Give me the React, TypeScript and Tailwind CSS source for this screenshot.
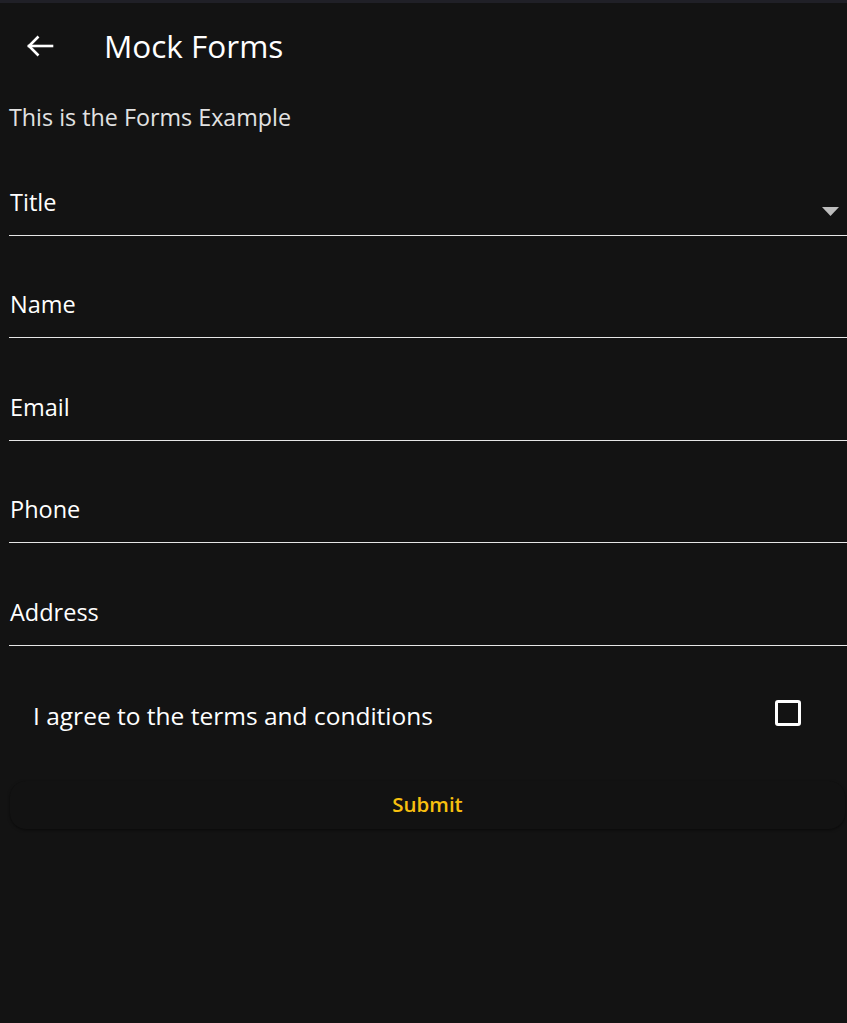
const fields = ["Name", "Email", "Phone", "Address"];

const Field: React.FC<{ label: string; dropdown?: boolean }> = ({ label, dropdown }) => {
    return (
        <div className="relative h-[102.5px] flex items-end pl-[9px]">
            <div className="flex w-full items-end border-b-[1.5px] border-[#e6e6e6] pb-[18px]">
                <span className="pl-px text-[23.5px] leading-[30px] text-white">{label}</span>
                {dropdown && (
                    <svg className="ml-auto mb-[1px] mr-[8px]" width="17" height="9" viewBox="0 0 17 9">
                        <path d="M0 0h17L8.5 9z" fill="#bdbdbd" />
                    </svg>
                )}
            </div>
        </div>
    );
};

const App: React.FC = () => {
    return (
        <div
            className="flex min-h-[1023px] w-[847px] flex-col bg-[#131313] text-white"
            style={{ fontFamily: '"Segoe UI", "Open Sans", sans-serif' }}
        >
            <div className="h-[3px] bg-[#202027]" />
            <div className="flex h-[86px] items-center">
                <button className="ml-[25px] flex h-[28px] w-[30px] items-center justify-center text-white">
                    <svg width="28" height="24" viewBox="0 0 28 24" fill="none" stroke="white" strokeWidth="2.6" strokeLinecap="square">
                        <path d="M3 12H26" />
                        <path d="M12.5 2.5L3 12l9.5 9.5" strokeLinecap="butt" />
                    </svg>
                </button>
                <h1 className="ml-[49px] text-[31.5px] leading-[38px] text-white">Mock Forms</h1>
            </div>
            <p className="mt-[13px] pl-[9px] text-[23.3px] leading-[30px] text-[#e2e2e2]">This is the Forms Example</p>

            <div className="mt-[1px]">
                <Field label="Title" dropdown />
                {fields.map((f) => (
                    <Field key={f} label={f} />
                ))}
            </div>

            <div className="flex h-[140px] items-center justify-between pl-[33px] pr-[46px]">
                <span className="text-[24.5px] leading-[30px] text-white">I agree to the terms and conditions</span>
                <div className="mb-[6px] h-[26px] w-[26px] rounded-[3px] border-[3px] border-white" />
            </div>

            <div className="ml-[10px] mr-[2px] -mt-[5px] flex h-[48px] items-center justify-center rounded-[16px] bg-[#121212] shadow-[0_1px_3px_rgba(0,0,0,0.5)]">
                <span className="text-[20.5px] font-semibold text-[#f8c00f]">Submit</span>
            </div>
        </div>
    );
};

export default App;
